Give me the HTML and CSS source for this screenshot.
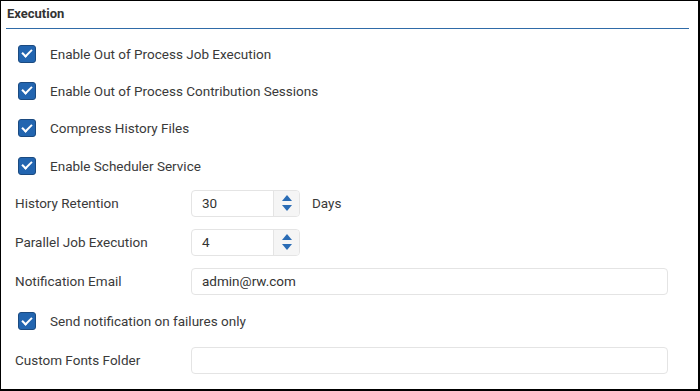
FILE: index.html
```html
<!DOCTYPE html>
<html lang="en">
<head>
    <meta charset="UTF-8">
    <meta name="viewport" content="width=device-width, initial-scale=1.0">
    <title>Execution Settings</title>
    <link rel="stylesheet" href="styles.css">
</head>
<body>
    <div class="panel">
        <div class="panel-title">Execution</div>
        <div class="panel-body">
            <label class="check-row">
                <span class="checkbox checked"></span>
                <span>Enable Out of Process Job Execution</span>
            </label>
            <label class="check-row">
                <span class="checkbox checked"></span>
                <span>Enable Out of Process Contribution Sessions</span>
            </label>
            <label class="check-row">
                <span class="checkbox checked"></span>
                <span>Compress History Files</span>
            </label>
            <label class="check-row">
                <span class="checkbox checked"></span>
                <span>Enable Scheduler Service</span>
            </label>

            <div class="field-row first-field">
                <span class="field-label">History Retention</span>
                <div class="spinner">
                    <span class="spinner-value">30</span>
                    <span class="spinner-btns">
                        <span class="arrow up"></span>
                        <span class="arrow down"></span>
                    </span>
                </div>
                <span class="unit">Days</span>
            </div>
            <div class="field-row">
                <span class="field-label">Parallel Job Execution</span>
                <div class="spinner">
                    <span class="spinner-value">4</span>
                    <span class="spinner-btns">
                        <span class="arrow up"></span>
                        <span class="arrow down"></span>
                    </span>
                </div>
            </div>
            <div class="field-row email-row">
                <span class="field-label">Notification Email</span>
                <div class="text-input">admin@rw.com</div>
            </div>
            <label class="check-row field-check">
                <span class="checkbox checked"></span>
                <span>Send notification on failures only</span>
            </label>
            <div class="field-row">
                <span class="field-label">Custom Fonts Folder</span>
                <div class="text-input"></div>
            </div>
        </div>
    </div>
</body>
</html>
```

FILE: styles.css
```css
body {
    margin: 0;
    font-family: Roboto, "Liberation Sans", Arial, sans-serif;
    font-size: 13.5px;
    color: #3a3a3a;
    background: #fff;
}
.panel {
    width: 700px;
    height: 391px;
    box-sizing: border-box;
    border: 1px solid #000;
    border-right-width: 2px;
    border-bottom-width: 2px;
}
.panel-title {
    height: 27px;
    line-height: 26px;
    margin: 0 9px 0 5px;
    padding-left: 1px;
    font-size: 13px;
    font-weight: bold;
    color: #333;
    border-bottom: 1px solid #2f6ba8;
}
.panel-body {
    padding: 11px 30px 0 14px;
}
.check-row {
    display: flex;
    align-items: center;
    height: 27px;
    margin-bottom: 10.4px;
    padding-left: 3px;
    gap: 14px;
}
.checkbox {
    width: 18px;
    height: 18px;
    box-sizing: border-box;
    border-radius: 3px;
    border: 1px solid #1b4a80;
    background: #2265b0;
    position: relative;
    flex-shrink: 0;
}
.checkbox.checked::after {
    content: "";
    position: absolute;
    left: 5px;
    top: 1.5px;
    width: 4px;
    height: 8px;
    border: solid #fff;
    border-width: 0 2.5px 2.5px 0;
    transform: rotate(45deg);
}
.field-row {
    display: flex;
    align-items: center;
    height: 27px;
    margin-bottom: 12px;
}
.first-field {
    margin-top: 6px;
}
.email-row {
    margin-bottom: 13px;
}
.field-check {
    margin-bottom: 12px;
}
.field-label {
    width: 176px;
    flex-shrink: 0;
}
.spinner {
    display: flex;
    width: 109px;
    height: 27px;
    box-sizing: border-box;
    border: 1px solid #e4e4e4;
    border-radius: 4px;
    overflow: hidden;
}
.spinner-value {
    flex: 1;
    padding-left: 10px;
    line-height: 25px;
    color: #333;
}
.spinner-btns {
    width: 25px;
    background: #f5f5f5;
    border-left: 1px solid #e4e4e4;
    display: flex;
    flex-direction: column;
    align-items: center;
    justify-content: center;
    gap: 4px;
}
.arrow {
    width: 0;
    height: 0;
    border-left: 5px solid transparent;
    border-right: 5px solid transparent;
}
.arrow.up {
    border-bottom: 6px solid #2a6cb5;
}
.arrow.down {
    border-top: 6px solid #2a6cb5;
}
.unit {
    margin-left: 12px;
}
.text-input {
    flex: 1;
    height: 27px;
    box-sizing: border-box;
    border: 1px solid #e4e4e4;
    border-radius: 4px;
    padding-left: 10px;
    line-height: 25px;
    color: #333;
}
```
